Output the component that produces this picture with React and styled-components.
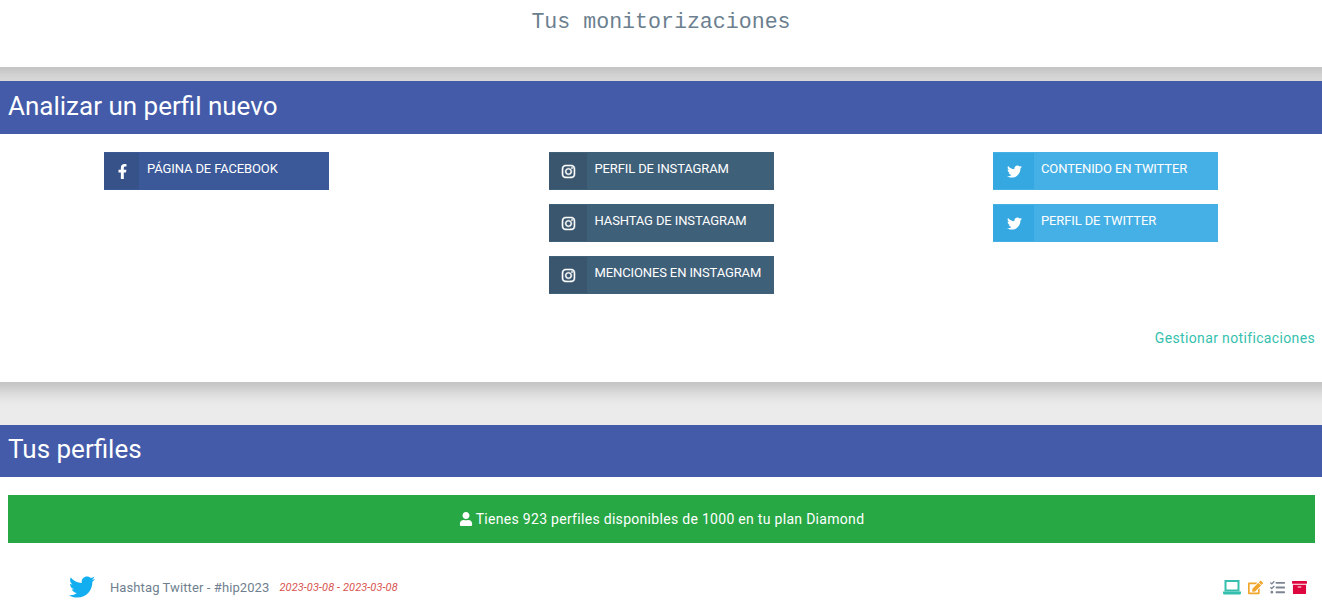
import React from "react";
import styled, { createGlobalStyle } from "styled-components";
import { FaFacebookF, FaInstagram, FaTwitter, FaUser, FaEdit, FaTasks, FaArchive } from "react-icons/fa";

const panelShadow = "0 8px 16px rgba(0, 0, 0, 0.2)";

const Global = createGlobalStyle`
  html, body { margin: 0; padding: 0; height: 611px; overflow: hidden; background: #ebebeb; }
  body { font-family: "Roboto", "Liberation Sans", sans-serif; }
`;

const Page = styled.div`
  position: relative;
  width: 1322px;
  height: 611px;
  overflow: hidden;
`;

const TitlePanel = styled.header`
  position: relative;
  z-index: 2;
  height: 67px;
  margin: 0 -30px;
  background: #fff;
  box-shadow: ${panelShadow};
  text-align: center;
`;

const PageTitle = styled.h1`
  margin: 0;
  padding-top: 10px;
  font: 400 21.6px/24px "Liberation Mono", monospace;
  color: #6c7f8f;
`;

const Section = styled.section`
  position: relative;
  z-index: ${(p) => p.$z || 1};
  margin: ${(p) => p.$top}px -30px 0;
  padding: 0 30px;
  background: #fff;
  box-shadow: ${(p) => (p.$shadow ? panelShadow : "none")};
`;

const SectionHead = styled.h2`
  margin: 0 -30px;
  height: ${(p) => p.$h}px;
  padding-left: 38px;
  background: #435ba9;
  color: #fff;
  font-weight: 400;
  font-size: 26px;
  line-height: ${(p) => p.$h - 3}px;
`;

const ButtonGrid = styled.div`
  display: flex;
  justify-content: space-between;
  align-items: flex-start;
  padding: 18px 104px 0;
  height: 194px;
  box-sizing: border-box;
`;

const Column = styled.div`
  display: flex;
  flex-direction: column;
  gap: 14px;
`;

const SocialButton = styled.a`
  display: flex;
  width: 225px;
  height: 38px;
  box-sizing: border-box;
  padding: 1px 0;
  background: ${(p) => p.$bg};
  color: #fff;
  font-size: 13px;
  line-height: 32px;
`;

const IconCell = styled.span`
  display: flex;
  align-items: center;
  justify-content: center;
  width: ${(p) => p.$w}px;
  padding: 1px 0 0 1px;
  box-sizing: border-box;
  background: ${(p) => p.$bg};
  font-size: 15px;

  svg {
    stroke-width: ${(p) => p.$stroke};
  }
`;

const Label = styled.span`
  margin-left: ${(p) => p.$ml}px;
  letter-spacing: -0.12px;
`;

const Manage = styled.div`
  height: 54px;
  padding-right: 7px;
  text-align: right;
  color: #36bfae;
  font-size: 14px;
  line-height: 20px;
  letter-spacing: 0.35px;
`;

const Banner = styled.div`
  display: flex;
  align-items: center;
  justify-content: center;
  gap: 3px;
  height: 48px;
  padding-bottom: 1px;
  box-sizing: border-box;
  margin: 18px 7px 0 8px;
  background: #28a745;
  color: #fff;
  font-size: 14px;
  letter-spacing: 0.3px;
`;

const ProfileRow = styled.div`
  display: flex;
  align-items: center;
  height: 88px;
  padding: 0 15px 0 69px;
`;

const Bird = styled(FaTwitter)`
  font-size: 26px;
  color: #12aef0;
  flex: none;
`;

const ProfileName = styled.span`
  margin-left: 15px;
  font-size: 13px;
  color: #6f7f8f;
  letter-spacing: 0.1px;
`;

const Dates = styled.span`
  margin-left: 10px;
  font-size: 11px;
  font-style: italic;
  color: #d9534f;
  letter-spacing: 0.1px;
`;

const Actions = styled.div`
  display: flex;
  align-items: center;
  gap: 7px;
  margin-left: auto;
  font-size: 15px;
`;

const Action = styled.span`
  display: flex;
  color: ${(p) => p.$c};
`;

const Arrow = styled.svg`
  position: absolute;
  left: 1261px;
  top: 525px;
  width: 36px;
  height: 50px;
`;

const Laptop = () => (
  <svg width="18" height="15" viewBox="0 0 18 15" fill="none">
    <rect x="2.5" y="1" width="13" height="9.5" stroke="currentColor" strokeWidth="2" />
    <path d="M0 11.5h18v1.7a1.3 1.3 0 0 1-1.3 1.3H1.3A1.3 1.3 0 0 1 0 13.2z" fill="currentColor" />
  </svg>
);

const fb = { bg: "#3b5998", cell: "#375189", w: 35, ml: 8, stroke: 0 };
const ig = { bg: "#3f6079", cell: "#3a566e", w: 38, ml: 8, stroke: 16 };
const tw = { bg: "#45b0e5", cell: "#35a8e1", w: 41, ml: 7, stroke: 0 };

const columns = [
  [{ ...fb, Icon: FaFacebookF, text: "PÁGINA DE FACEBOOK" }],
  [
    { ...ig, Icon: FaInstagram, text: "PERFIL DE INSTAGRAM" },
    { ...ig, Icon: FaInstagram, text: "HASHTAG DE INSTAGRAM" },
    { ...ig, Icon: FaInstagram, text: "MENCIONES EN INSTAGRAM" },
  ],
  [
    { ...tw, Icon: FaTwitter, text: "CONTENIDO EN TWITTER" },
    { ...tw, Icon: FaTwitter, text: "PERFIL DE TWITTER" },
  ],
];

export default function App() {
  return (
    <Page>
      <Global />
      <TitlePanel>
        <PageTitle>Tus monitorizaciones</PageTitle>
      </TitlePanel>
      <Section $top={14} $shadow $z={2}>
        <SectionHead $h={53}>Analizar un perfil nuevo</SectionHead>
        <ButtonGrid>
          {columns.map((col, i) => (
            <Column key={i}>
              {col.map(({ Icon, text, bg, cell, w, ml, stroke }) => (
                <SocialButton key={text} $bg={bg}>
                  <IconCell $bg={cell} $w={w} $stroke={stroke}>
                    <Icon />
                  </IconCell>
                  <Label $ml={ml}>{text}</Label>
                </SocialButton>
              ))}
            </Column>
          ))}
        </ButtonGrid>
        <Manage>Gestionar notificaciones</Manage>
      </Section>
      <Section $top={43}>
        <SectionHead $h={52}>Tus perfiles</SectionHead>
        <Banner>
          <FaUser />
          <span>Tienes 923 perfiles disponibles de 1000 en tu plan Diamond</span>
        </Banner>
        <ProfileRow>
          <Bird />
          <ProfileName>Hashtag Twitter - #hip2023</ProfileName>
          <Dates>2023-03-08 - 2023-03-08</Dates>
          <Actions>
            <Action $c="#36bfae"><Laptop /></Action>
            <Action $c="#f0a52b"><FaEdit /></Action>
            <Action $c="#7d8594"><FaTasks /></Action>
            <Action $c="#de063f"><FaArchive /></Action>
          </Actions>
        </ProfileRow>
      </Section>
      <Arrow viewBox="0 0 36 50">
        <path d="M9 0h18v26h9L18 50 0 26h9z" fill="#de063f" />
      </Arrow>
    </Page>
  );
}
